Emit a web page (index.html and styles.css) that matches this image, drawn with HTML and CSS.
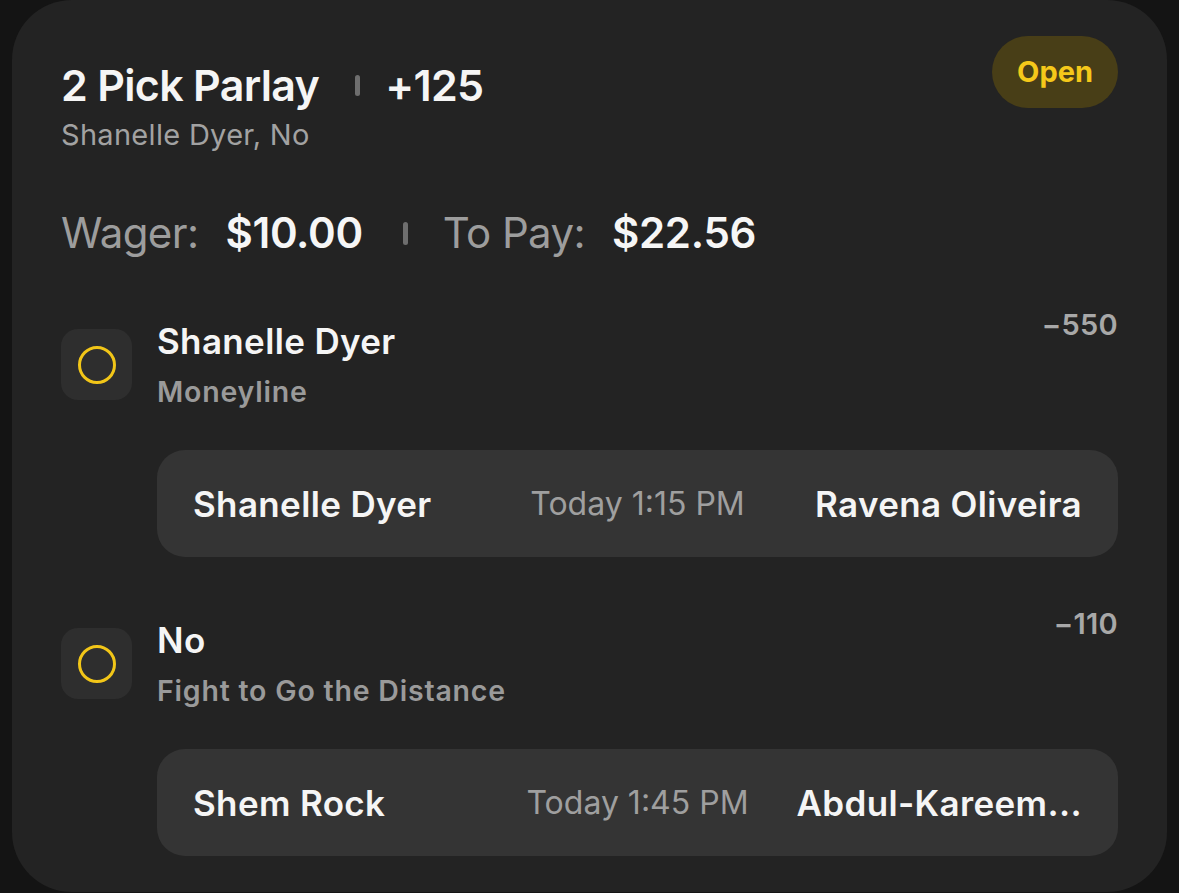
FILE: index.html
```html
<!DOCTYPE html>
<html lang="en">
<head>
<meta charset="utf-8">
<title>2 Pick Parlay</title>
<link rel="stylesheet" href="styles.css">
</head>
<body>
<main class="card">
  <header class="head">
    <div class="head-main">
      <div class="title-row">
        <span class="title">2 Pick Parlay</span>
        <span class="sep"></span>
        <span class="title">+125</span>
      </div>
      <div class="subtitle">Shanelle Dyer, No</div>
    </div>
    <span class="badge">Open</span>
  </header>

  <div class="wager">
    <span class="lbl">Wager:</span>
    <span class="val">$10.00</span>
    <span class="sep sep-wager"></span>
    <span class="lbl">To Pay:</span>
    <span class="val">$22.56</span>
  </div>

  <section class="pick">
    <div class="status">
      <svg viewBox="0 0 40 40" width="40" height="40"><circle cx="20" cy="20" r="17.5" fill="none" stroke="#f2c618" stroke-width="3"/></svg>
    </div>
    <div class="pick-text">
      <div class="pick-name">Shanelle Dyer</div>
      <div class="pick-market">Moneyline</div>
    </div>
    <div class="odds">−550</div>
    <div class="match">
      <span class="team">Shanelle Dyer</span>
      <span class="time">Today 1:15 PM</span>
      <span class="team team-right">Ravena Oliveira</span>
    </div>
  </section>

  <section class="pick">
    <div class="status">
      <svg viewBox="0 0 40 40" width="40" height="40"><circle cx="20" cy="20" r="17.5" fill="none" stroke="#f2c618" stroke-width="3"/></svg>
    </div>
    <div class="pick-text">
      <div class="pick-name">No</div>
      <div class="pick-market">Fight to Go the Distance</div>
    </div>
    <div class="odds">−110</div>
    <div class="match">
      <span class="team">Shem Rock</span>
      <span class="time">Today 1:45 PM</span>
      <span class="team team-right">Abdul-Kareem...</span>
    </div>
  </section>
</main>
</body>
</html>
```

FILE: styles.css
```css
html, body {
  margin: 0;
  padding: 0;
  background: #141414;
}

body {
  font-family: Inter, "Noto Sans", "Liberation Sans", sans-serif;
  color: #f4f4f4;
  height: 893px;
  overflow: hidden;
}

.card {
  box-sizing: border-box;
  margin: 0 12px;
  height: 892px;
  background: #232323;
  border-radius: 60px;
  padding: 36px 49px 0 49px;
}

.head {
  display: flex;
  justify-content: space-between;
  align-items: flex-start;
}

.head-main {
  margin-top: 23px;
}

.title-row {
  display: flex;
  align-items: center;
}

.title {
  font-size: 43px;
  line-height: 52px;
  font-weight: 600;
  color: #f5f5f5;
  letter-spacing: -0.7px;
}

.sep {
  display: block;
  width: 5px;
  height: 21px;
  border-radius: 3px;
  background: #6e6e6e;
  margin: 0 25px 0 36px;
}

.subtitle {
  margin-top: 6px;
  font-size: 29px;
  line-height: 36px;
  color: #a2a2a2;
  letter-spacing: 0.3px;
}

.badge {
  display: block;
  height: 72px;
  line-height: 72px;
  padding: 0 25px;
  border-radius: 36px;
  background: #483e17;
  color: #f5c81a;
  font-size: 29px;
  font-weight: 700;
}

.wager {
  display: flex;
  align-items: center;
  margin-top: 55px;
  font-size: 42px;
  line-height: 50px;
}

.lbl {
  color: #9d9d9d;
  font-weight: 400;
  letter-spacing: -0.6px;
}

.val {
  margin-left: 27px;
  font-weight: 600;
  color: #f6f6f6;
  letter-spacing: -0.3px;
}

.sep-wager {
  height: 23px;
  margin: 0 35px 0 40px;
}

.pick {
  display: grid;
  grid-template-columns: 71px 1fr auto;
  column-gap: 25px;
  row-gap: 41px;
  align-items: center;
  margin-top: 62px;
}

.status {
  width: 71px;
  height: 71px;
  border-radius: 17px;
  background: #2e2e2e;
  display: flex;
  align-items: center;
  justify-content: center;
}

.status svg {
  display: block;
}

.pick-name {
  font-size: 35px;
  line-height: 42px;
  font-weight: 600;
  color: #f5f5f5;
  letter-spacing: 0.35px;
}

.pick-market {
  margin-top: 13px;
  font-size: 28.5px;
  line-height: 34px;
  font-weight: 600;
  color: #9a9a9a;
  letter-spacing: 0.8px;
}

.odds {
  align-self: start;
  margin-top: -12px;
  font-size: 29px;
  line-height: 34px;
  font-weight: 600;
  color: #a8a8a8;
  letter-spacing: 0.3px;
}

.match {
  grid-column: 2 / 4;
  display: grid;
  grid-template-columns: 1fr auto 1fr;
  column-gap: 40px;
  align-items: center;
  height: 107px;
  padding: 0 36px;
  border-radius: 28px;
  background: #343434;
}

.team {
  font-size: 35px;
  line-height: 42px;
  font-weight: 600;
  color: #f5f5f5;
  letter-spacing: 0.35px;
  white-space: nowrap;
  overflow: hidden;
  text-overflow: ellipsis;
}

.team-right {
  text-align: right;
}

.time {
  font-size: 32px;
  line-height: 40px;
  color: #9f9f9f;
  white-space: nowrap;
}
```
